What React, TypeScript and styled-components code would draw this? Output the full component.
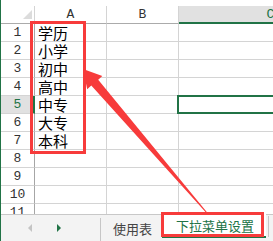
import React from 'react';
import styled, { createGlobalStyle } from 'styled-components';

const GREEN = '#217346';
const RED = '#f73b3b';

const GlobalStyle = createGlobalStyle`
  html, body {
    margin: 0;
    padding: 0;
    background: #fff;
    overflow: hidden;
  }
`;

interface Column {
  key: string;
  width: number;
}

const columns: Column[] = [
  { key: 'A', width: 72 },
  { key: 'B', width: 72 },
  { key: 'C', width: 184 },
];

const values = ['学历', '小学', '初中', '高中', '中专', '大专', '本科'];
const rowCount = 11;
const activeRow = 5;
const activeCol = 'C';

const App: React.FC = () => {
  const rows = Array.from({ length: rowCount }, (_, i) => i + 1);

  return (
    <>
      <GlobalStyle />
      <Frame>
        <Sheet>
          <TopGap />
          <HeaderRow>
            <Corner />
            {columns.map((c) => (
              <ColHead key={c.key} $w={c.width} $active={c.key === activeCol}>
                {c.key}
              </ColHead>
            ))}
          </HeaderRow>
          {rows.map((r) => (
            <Row key={r}>
              <RowHead $active={r === activeRow}>{r}</RowHead>
              {columns.map((c) => (
                <Cell key={c.key} $w={c.width} $selected={r === activeRow && c.key === activeCol}>
                  {c.key === 'A' ? values[r - 1] ?? '' : ''}
                </Cell>
              ))}
            </Row>
          ))}
        </Sheet>

        <TabBar>
          <NavArrow $dir="left" />
          <NavArrow $dir="right" />
          <Divider />
          <Tab>使用表</Tab>
          <Tab $active>下拉菜单设置</Tab>
          <TabEdge />
        </TabBar>

        <Callout style={{ left: 29, top: 21, width: 56, height: 133 }} />
        <Callout style={{ left: 160, top: 212, width: 103, height: 25 }} />
        <Arrow viewBox="0 0 273 241" width="273" height="241">
          <polygon
            points="83,69 102.3,76.1 98.2,79.7 207.4,212.7 206.6,213.3 91.3,85.6 87.2,89.2"
            fill={RED}
          />
        </Arrow>
      </Frame>
    </>
  );
};

const Frame = styled.div`
  position: relative;
  width: 273px;
  height: 241px;
  overflow: hidden;
  box-sizing: border-box;
  border-left: 1px solid ${GREEN};
  display: flex;
  flex-direction: column;
  background: #fff;
`;

const Sheet = styled.div`
  flex: 1;
  min-width: 0;
  overflow: hidden;
  display: flex;
  flex-direction: column;
`;

const TopGap = styled.div`
  height: 6px;
  flex-shrink: 0;
`;

const HeaderRow = styled.div`
  display: flex;
  height: 18px;
  flex-shrink: 0;
`;

const Corner = styled.div`
  position: relative;
  width: 34px;
  flex-shrink: 0;
  box-sizing: border-box;
  border-right: 1px solid #d4d4d4;
  border-bottom: 1px solid #ababab;

  &::after {
    content: '';
    position: absolute;
    right: 2px;
    bottom: 4px;
    width: 0;
    height: 0;
    border-left: 9px solid transparent;
    border-bottom: 9px solid #dcdcdc;
  }
`;

const ColHead = styled.div<{ $w: number; $active?: boolean }>`
  flex: 0 0 ${(p) => p.$w}px;
  width: ${(p) => p.$w}px;
  box-sizing: border-box;
  display: flex;
  justify-content: center;
  align-items: center;
  border-right: 1px solid #d4d4d4;
  border-bottom: ${(p) => (p.$active ? `2px solid ${GREEN}` : '1px solid #ababab')};
  background: ${(p) => (p.$active ? '#e1e1e1' : '#fff')};
  color: ${(p) => (p.$active ? GREEN : '#333')};
  font-family: 'Liberation Mono', monospace;
  font-size: 13px;
`;

const Row = styled.div`
  display: flex;
  height: 18px;
  flex-shrink: 0;
`;

const RowHead = styled.div<{ $active?: boolean }>`
  width: 34px;
  flex-shrink: 0;
  box-sizing: border-box;
  border-right: ${(p) => (p.$active ? `2px solid ${GREEN}` : '1px solid #a6a6a6')};
  border-bottom: 1px solid #d4d4d4;
  background: ${(p) => (p.$active ? '#e1e1e1' : '#fff')};
  color: ${(p) => (p.$active ? GREEN : '#333')};
  font-family: 'Liberation Mono', monospace;
  font-size: 13px;
  line-height: 17px;
  text-align: center;
  padding-left: ${(p) => (p.$active ? 1 : 0)}px;
`;

const Cell = styled.div<{ $w: number; $selected?: boolean }>`
  position: relative;
  flex: 0 0 ${(p) => p.$w}px;
  width: ${(p) => p.$w}px;
  box-sizing: border-box;
  border-right: 1px solid #d4d4d4;
  border-bottom: 1px solid #d4d4d4;
  padding-left: 3px;
  font-family: 'Noto Sans CJK SC', 'Noto Sans', sans-serif;
  font-size: 15px;
  line-height: 17px;
  color: #000;
  white-space: nowrap;

  ${(p) =>
    p.$selected &&
    `
    &::after {
      content: '';
      position: absolute;
      left: -2px;
      top: -1px;
      right: 0;
      bottom: -1px;
      border: 2px solid ${GREEN};
    }
  `}
`;

const TabBar = styled.div`
  height: 27px;
  flex-shrink: 0;
  box-sizing: border-box;
  border-top: 1px solid #c8c8c8;
  background: #f3f3f3;
  display: flex;
  align-items: stretch;
`;

const NavArrow = styled.div<{ $dir: 'left' | 'right' }>`
  width: 0;
  height: 0;
  align-self: center;
  border-top: 4px solid transparent;
  border-bottom: 4px solid transparent;
  ${(p) =>
    p.$dir === 'left'
      ? `border-right: 4px solid #c4c4c4; margin-left: 27px;`
      : `border-left: 4px solid ${GREEN}; margin-left: 25px;`}
`;

const Divider = styled.div`
  width: 1px;
  margin: 3px 0 0 39px;
  background: #c6c6c6;
`;

const Tab = styled.div<{ $active?: boolean }>`
  box-sizing: border-box;
  padding: ${(p) => (p.$active ? '0 12px 0 14px' : '0 10px 0 12px')};
  margin-bottom: ${(p) => (p.$active ? 3 : 0)}px;
  margin-top: ${(p) => (p.$active ? -1 : 0)}px;
  background: ${(p) => (p.$active ? '#fff' : 'transparent')};
  border-bottom: ${(p) => (p.$active ? `2px solid ${GREEN}` : 'none')};
  color: ${(p) => (p.$active ? GREEN : '#444')};
  font-family: 'Noto Sans CJK SC', 'Noto Sans', sans-serif;
  font-size: 13px;
  display: flex;
  align-items: center;
  white-space: nowrap;
`;

const TabEdge = styled.div`
  width: 1px;
  margin: 1px 0 4px 2px;
  background: #c6c6c6;
`;

const Callout = styled.div`
  position: absolute;
  box-sizing: border-box;
  border: 3px solid ${RED};
  pointer-events: none;
`;

const Arrow = styled.svg`
  position: absolute;
  left: -1px;
  top: 0;
  pointer-events: none;
`;

export default App;
